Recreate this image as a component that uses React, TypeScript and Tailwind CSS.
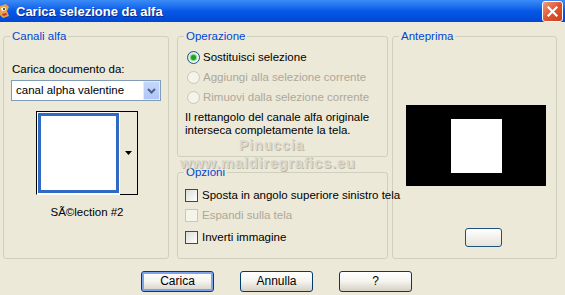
import React from 'react';

const Radio = ({ checked = false, disabled = false }: { checked?: boolean; disabled?: boolean }) => (
  <span
    className={`w-[13px] h-[13px] rounded-full border flex items-center justify-center shrink-0 ${
      disabled ? 'border-[#CAC8BB] bg-[#F5F4EA]' : 'border-[#1C5180] bg-gradient-to-br from-[#DCDCD7] to-white'
    }`}
  >
    {checked && <span className="w-[5px] h-[5px] rounded-full bg-[#21A121] shadow-[0_0_0_1px_#7BD97B]" />}
  </span>
);

const Check = ({ disabled = false }: { disabled?: boolean }) => (
  <span
    className={`w-[13px] h-[13px] border shrink-0 ${
      disabled ? 'border-[#CAC8BB] bg-[#F5F4EA]' : 'border-[#1C5180] bg-gradient-to-br from-[#DCDCD7] to-white'
    }`}
  />
);

const XpButton = ({ label, focused = false, className = '' }: { label: string; focused?: boolean; className?: string }) => (
  <button
    className={`h-[21px] w-[73px] rounded-[3px] border border-[#003C74] bg-gradient-to-b from-white via-[#F4F3EE] to-[#D6D0C5] text-[12px] text-black flex items-center justify-center ${
      focused ? 'shadow-[inset_0_0_0_2px_#7EA2EE]' : ''
    } ${className}`}
  >
    {label}
  </button>
);

const Group = ({ title, className = '', children }: { title: string; className?: string; children?: React.ReactNode }) => (
  <fieldset className={`border border-[#D0D0BF] rounded-[3px] min-w-0 ${className}`}>
    <legend className="ml-[6px] px-[2px] text-[11.5px] leading-[13px] text-[#0046D5]">{title}</legend>
    {children}
  </fieldset>
);

export default function App() {
  return (
    <div
      className="w-[565px] h-[295px] bg-[#ECE9D8] flex flex-col overflow-hidden text-[11.5px] leading-[13px] text-black"
      style={{ fontFamily: '"Liberation Sans", Arial, sans-serif' }}
    >
      {/* title bar */}
      <div className="h-[22px] shrink-0 flex items-center bg-gradient-to-b from-[#3B8CF7] via-[#0758E6] to-[#0047D4] pr-[2px]">
        <svg width="12" height="16" viewBox="0 0 12 16" className="shrink-0">
          <path d="M0 3 L6 1 L9 4 L7 8 L9 13 L3 15 L0 12 Z" fill="#E8A24A" />
          <path d="M1 5 L5 4 L6 7 L2 8 Z" fill="#FFFFFF" />
          <circle cx="4" cy="6" r="1" fill="#222" />
          <path d="M2 11 L6 10 L7 12 L3 13 Z" fill="#C0392B" />
        </svg>
        <span className="ml-[4px] text-white font-bold text-[13px] [text-shadow:1px_1px_0_#0A2A8A]">
          Carica selezione da alfa
        </span>
        <div className="ml-auto w-[21px] h-[21px] rounded-[3px] border border-white bg-gradient-to-br from-[#F09A7E] via-[#E2542D] to-[#C8411F] flex items-center justify-center">
          <svg width="11" height="11" viewBox="0 0 11 11">
            <path d="M1.5 1.5 L9.5 9.5 M9.5 1.5 L1.5 9.5" stroke="white" strokeWidth="2.2" strokeLinecap="square" />
          </svg>
        </div>
      </div>

      {/* body */}
      <div className="flex-1 flex flex-col px-[3px] pt-[8px]">
        <div className="flex h-[229px]">
          {/* Canali alfa */}
          <Group title="Canali alfa" className="w-[166px] h-full">
            <div className="mt-[20px] ml-[8px] text-[11.5px]">Carica documento da:</div>
            <div className="mt-[4px] ml-[7px] w-[150px] h-[21px] border border-[#7F9DB9] bg-white flex items-center">
              <span className="pl-[4px] flex-1 text-[11.5px]">canal alpha valentine</span>
              <span className="w-[17px] h-[19px] border border-[#E1EAFE] bg-gradient-to-b from-[#C6D6FC] to-[#B0C6F8] flex items-center justify-center rounded-[1px]">
                <svg width="9" height="6" viewBox="0 0 9 6">
                  <path d="M1 1 L4.5 4.5 L8 1" stroke="#4D6185" strokeWidth="2" fill="none" />
                </svg>
              </span>
            </div>
            <div className="mt-[10px] ml-[32px] w-[102px] h-[84px] flex">
              <div className="flex-1 border-t border-l border-black border-b border-b-white p-[1px] bg-white">
                <div className="w-full h-full border-[3px] border-[#316AC5] bg-white" />
              </div>
              <div className="w-[18px] border-t border-black border-r border-b bg-[#ECE9D8] flex items-center justify-center">
                <svg width="7" height="4" viewBox="0 0 7 4">
                  <path d="M0 0 L7 0 L3.5 4 Z" fill="#000" />
                </svg>
              </div>
            </div>
            <div className="mt-[11px] ml-[2px] text-center text-[11.5px]">SÃ©lection #2</div>
          </Group>

          {/* middle column */}
          <div className="ml-[8px] w-[211px] flex flex-col relative">
            <Group title="Operazione" className="h-[127px]">
              <div className="mt-[4px] ml-[9px] flex flex-col whitespace-nowrap">
                <div className="h-[20px] flex items-center gap-[3px]">
                  <Radio checked />
                  <span>Sostituisci selezione</span>
                </div>
                <div className="h-[20px] flex items-center gap-[3px] text-[#ACA899]">
                  <Radio disabled />
                  <span>Aggiungi alla selezione corrente</span>
                </div>
                <div className="h-[20px] flex items-center gap-[3px] text-[#ACA899]">
                  <Radio disabled />
                  <span>Rimuovi dalla selezione corrente</span>
                </div>
              </div>
              <div className="mt-[4px] ml-[7px] whitespace-nowrap">
                Il rettangolo del canale alfa originale
                <br />
                interseca completamente la tela.
              </div>
            </Group>
            <Group title="Opzioni" className="mt-[9px] h-[93px]">
              <div className="mt-[6px] ml-[7px] flex flex-col whitespace-nowrap">
                <div className="h-[20px] flex items-center gap-[4px]">
                  <Check />
                  <span>Sposta in angolo superiore sinistro tela</span>
                </div>
                <div className="h-[20px] flex items-center gap-[4px] text-[#ACA899]">
                  <Check disabled />
                  <span>Espandi sulla tela</span>
                </div>
                <div className="mt-[2px] h-[20px] flex items-center gap-[4px]">
                  <Check />
                  <span>Inverti immagine</span>
                </div>
              </div>
            </Group>
            {/* watermark */}
            <div className="absolute left-[62px] top-[109px] text-[14px] font-bold tracking-[1px] text-[#DCD9CC] [text-shadow:1px_1px_0_#BDB9AA] pointer-events-none">
              Pinuccia
            </div>
            <div className="absolute left-[3px] top-[126px] text-[15px] font-bold tracking-[0.6px] text-[#DCD9CC] [text-shadow:1px_1px_0_#BDB9AA] pointer-events-none whitespace-nowrap">
              www.maldiregrafics.eu
            </div>
          </div>

          {/* Anteprima */}
          <Group title="Anteprima" className="ml-[4px] w-[165px] h-full">
            <div className="mt-[62px] ml-[13px] w-[140px] h-[81px] bg-black flex items-center justify-center">
              <div className="w-[51px] h-[54px] bg-white" />
            </div>
            <div className="mt-[42px] ml-[72px] w-[37px] h-[19px] rounded-[3px] border border-[#1C5180] bg-gradient-to-b from-white to-[#E6E3D8]" />
          </Group>
        </div>

        {/* buttons */}
        <div className="mt-[12px] flex pl-[138px] gap-[26px]">
          <XpButton label="Carica" focused />
          <XpButton label="Annulla" />
          <XpButton label="?" />
        </div>
      </div>
    </div>
  );
}
